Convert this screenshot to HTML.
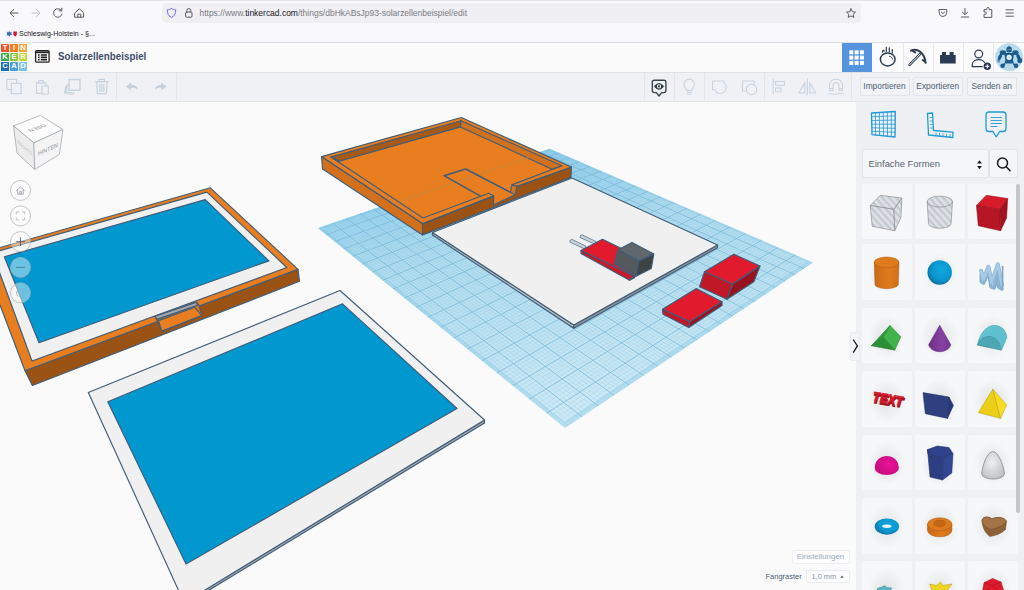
<!DOCTYPE html>
<html lang="de"><head><meta charset="utf-8"><title>Solarzellenbeispiel</title>
<style>
*{box-sizing:border-box;margin:0;padding:0}
html,body{width:1024px;height:590px;overflow:hidden;background:#f9f9fb;font-family:"Liberation Sans",sans-serif}
body{position:relative}
.abs{position:absolute}
svg{position:absolute;overflow:visible}
#chrome{position:absolute;left:0;top:0;width:1024px;height:42px;background:#f9f9fb}
#chrome .topline{position:absolute;left:0;top:0;width:1024px;height:1px;background:#e4e4ea}
#urlbar{position:absolute;left:162px;top:3px;width:699px;height:20px;border-radius:4px;background:#f0f0f4}
#url{position:absolute;left:199.5px;top:8.4px;font-size:8.52px;line-height:10px;color:#7b7b84;white-space:nowrap;letter-spacing:-0.02px}
#url b{font-weight:normal;color:#15141a}
#bm{position:absolute;left:19px;top:28.5px;font-size:7.7px;transform:scaleX(.92);transform-origin:0 0;line-height:10px;color:#15141a;white-space:nowrap}
#hdr{position:absolute;left:0;top:42px;width:1024px;height:31px;background:#fbfbfc;border-top:1px solid #dcdfe4;border-bottom:1px solid #dde1e8}
#title{position:absolute;left:57.5px;top:50px;font-size:11px;transform:scaleX(.892);transform-origin:0 0;line-height:13px;font-weight:bold;color:#3f5069;white-space:nowrap}
.lg{position:absolute;width:8.2px;height:8.2px;color:#fff;font-size:7.6px;font-weight:bold;line-height:8.6px;border-radius:.6px;text-align:center}
#tb{position:absolute;left:0;top:73px;width:1024px;height:28.5px;background:#f0f1f4;border-bottom:1px solid #e2e5ea}
.vd{position:absolute;top:73px;width:1px;height:28px;background:#e3e6eb}
.hd{position:absolute;top:43px;width:1px;height:29px;background:#e6e9ee}
.btn{position:absolute;top:77px;height:19px;border:1px solid #e1e5eb;border-radius:2px;background:#f1f3f6;color:#4f5e73;font-size:8.4px;line-height:17px;text-align:center;white-space:nowrap}
#vp{position:absolute;left:0;top:101.5px;width:856px;height:488.5px;background:#fafafa}
#panel{position:absolute;left:856px;top:101.5px;width:168px;height:488.5px;background:#eff0f3}
.tile{position:absolute;background:#f6f7f9;border-radius:2px}
#dd{position:absolute;left:862.5px;top:150px;width:125px;height:27px;background:#f5f6f9;border-radius:2px;box-shadow:0 0 2px rgba(120,130,150,.35)}
#dd span{position:absolute;left:6px;top:8px;font-size:9.4px;line-height:12px;color:#5a6472;white-space:nowrap}
#sb{position:absolute;left:990px;top:150px;width:27px;height:27px;background:#f5f6f9;border-radius:2px;box-shadow:0 0 2px rgba(120,130,150,.35)}
#scroll{position:absolute;left:1016.3px;top:184px;width:4.2px;height:329px;background:#c6c6c6;border-radius:2px}
#einst{position:absolute;left:791.5px;top:550px;width:58px;height:13.5px;border:1px solid #eaedf1;border-radius:2px;background:#fdfdfe;color:#a0acba;font-size:7.9px;line-height:12px;text-align:center;white-space:nowrap}
#fang{position:absolute;left:765.5px;top:571.5px;font-size:7.5px;line-height:10px;color:#4d5c72;white-space:nowrap}
#snap{position:absolute;left:805.5px;top:570px;width:44px;height:12.5px;border:1px solid #e9edf2;border-radius:2px;background:#fdfdfe;color:#8a95a3;font-size:7.4px;line-height:11px;white-space:nowrap;padding-left:5px}
#handle{position:absolute;left:849.5px;top:332px;width:10px;height:28.5px;background:#f1f3f6;border:1px solid #e9ecf0;border-radius:1px}
</style></head><body>
<div id="chrome"><div class="topline"></div>
<div id="urlbar"></div>
<div id="url">https://www.<b>tinkercad.com</b>/things/dbHkABsJp93-solarzellenbeispiel/edit</div>
<div id="bm">Schleswig-Holstein - §...</div>
<svg width="1024" height="42" viewBox="0 0 1024 42" style="left:0;top:0">
 <g fill="none" stroke="#5b5b66" stroke-width="1" stroke-linecap="round" stroke-linejoin="round">
  <path d="M18 13H10.3M13.8 9.3L10 13l3.8 3.7"/>
  <path d="M32 13h7.7M36.200 9.3L40 13l-3.800 3.7" stroke="#c0c0c8"/>
  <path d="M61.400 10.500A4.300 4.300 0 1 0 62 14.200M61.800 8.200v2.600h-2.600"/>
  <path d="M75 12.800L79.300 8.800l4.300 4v4.400h-8.600zM77.800 17.200v-3h3v3"/>
  <path d="M171.500 8.600c1.500 1 3 1.200 4.200 1.200 0 4-1.200 6.400-4.200 7.600-3-1.200-4.200-3.600-4.200-7.600 1.200 0 2.700-.2 4.200-1.200z" stroke="#6a6df0"/>
  <rect x="185.600" y="12" width="6.400" height="5.200" rx="1"/><path d="M186.900 12v-1.500a1.900 1.900 0 0 1 3.800 0V12"/>
  <path d="M851 8.800l1.400 2.900 3.100.4-2.300 2.200.6 3.100-2.800-1.500-2.800 1.500.6-3.100-2.300-2.200 3.100-.4z"/>
  <path d="M939.300 9.500h7.400v3.200a3.700 3.700 0 0 1-7.400 0zM941.300 12l1.700 1.600 1.700-1.600"/>
  <path d="M965 8.500v6M962.500 12.200l2.500 2.500 2.500-2.500M961.300 17h7.400"/>
  <path d="M984 17v-2.600h1.200a1.200 1.200 0 0 0 0-2.400H984V9.600h2.800V8.700a1.200 1.200 0 0 1 2.400 0v.9h2.600V17z"/>
  <path d="M1006 9.800h7.400M1006 13h7.400M1006 16.200h7.400"/>
 </g>
 <g>
  <path d="M6.500 31.500l1.700 1 1-1.800.9 1.900 1.800-.8-.8 1.800 1.400 1.300-2 .2-1 1.700-1.200-1.500-2 .3 1-1.700z" fill="#3c6db0"/>
  <path d="M13.300 31.600h3.600v2.200c0 1.600-1 2.400-1.800 2.800-.8-.4-1.800-1.200-1.800-2.800z" fill="#d8163c"/>
 </g>
</svg>
</div>

<div id="hdr"></div>
<div class="lg" style="left:1px;top:44.2px;background:#f0512b">T</div><div class="lg" style="left:10px;top:44.2px;background:#f47b20">I</div><div class="lg" style="left:19px;top:44.2px;background:#f9a13a">N</div>
<div class="lg" style="left:1px;top:53.2px;background:#3aae49">K</div><div class="lg" style="left:10px;top:53.2px;background:#8cc63f">E</div><div class="lg" style="left:19px;top:53.2px;background:#c8d42e">R</div>
<div class="lg" style="left:1px;top:62.4px;background:#1c6fb7">C</div><div class="lg" style="left:10px;top:62.4px;background:#4a9fd8">A</div><div class="lg" style="left:19px;top:62.4px;background:#7cc4e8">D</div>
<div id="title">Solarzellenbeispiel</div>
<div class="abs" style="left:841.7px;top:43px;width:30px;height:29px;background:#5694de"></div>
<div class="hd" style="left:902.5px"></div><div class="hd" style="left:932.5px"></div><div class="hd" style="left:963px"></div><div class="hd" style="left:993.3px"></div>
<svg width="1024" height="31" viewBox="0 42 1024 31" style="left:0;top:42px">
 <g fill="none" stroke="#222" stroke-width="1.300"><rect x="35.600" y="50.600" width="13.500" height="11.500" rx="1.200"/><path d="M35.600 52.300h13.500" stroke-width="1.800"/></g>
 <g stroke="#222" stroke-width="1.300"><path d="M38 55h1.600M40.800 55h6.200M38 57.400h1.600M40.800 57.400h6.200M38 59.800h1.600M40.800 59.800h6.200" stroke-width="1.600"/></g>
 <g fill="#fff"><rect x="849.300" y="50.300" width="4" height="4"/><rect x="854.600" y="50.300" width="4" height="4"/><rect x="859.900" y="50.300" width="4" height="4"/>
 <rect x="849.300" y="55.600" width="4" height="4"/><rect x="854.600" y="55.600" width="4" height="4"/><rect x="859.900" y="55.600" width="4" height="4"/>
 <rect x="849.300" y="60.900" width="4" height="4"/><rect x="854.600" y="60.900" width="4" height="4"/><rect x="859.900" y="60.900" width="4" height="4"/></g>
 <g fill="none" stroke="#2b3b52" stroke-width="1.500" stroke-linecap="round" stroke-linejoin="round">
  <ellipse cx="887.700" cy="59.400" rx="7.300" ry="6.500"/><path d="M882.800 52.300c-.8-1.800.6-2.800 1.500-1.200M886.300 47.300v4.300M889.300 47.800v4M892.300 49.500v3.500" stroke-width="1.200"/><path d="M889.500 56.300c1.600.2 2.800 1.300 3 2.800" stroke-width="1"/>
  <path d="M909.600 64.900l10.400-10.700" stroke-width="2.600"/><path d="M909.600 64.900l10.400-10.700" stroke="#fff" stroke-width="0.900"/>
  <path d="M911 50.600c6-2.600 13.500 1.500 14.600 12.200M912 50.300l3.300 2.200M925.400 62l-2.600-2" stroke-width="2"/>
  <circle cx="978.700" cy="54" r="3.900" stroke-width="1.200"/><path d="M972.300 66.600v-1.800c0-6.800 12.800-6.800 12.800 0" stroke-width="1.200"/><path d="M972.300 66.600h10" stroke-width="1.200"/>
 </g>
 <path d="M940 55h2v-3h4v3h3.600v-3h4v3h2.100v8.400H940z" fill="#2b3b52"/>
 <circle cx="987.300" cy="66.300" r="4.300" fill="#fdfdfe"/><circle cx="987.300" cy="66.300" r="3.700" fill="#2b3b52"/><path d="M985.300 66.300h4M987.300 64.300v4" stroke="#fff" stroke-width="1"/>
 <circle cx="1009.100" cy="57.200" r="13.900" fill="#b9dcec"/>
 <g fill="#1d5c8e">
  <rect x="1006.400" y="46.800" width="5.400" height="5.800" rx="2"/><path d="M1009.100 45.300l.8 2h-1.600z"/>
  <ellipse cx="1002.900" cy="52.600" rx="3.200" ry="2.400"/><ellipse cx="1015.400" cy="52.600" rx="3.200" ry="2.400"/>
  <path d="M1004.300 53h9.800l-1.300 9.500h-7.200z"/>
  <ellipse cx="1000" cy="57" rx="1.700" ry="3.300" transform="rotate(25 1000 57)"/><ellipse cx="1018.400" cy="57" rx="1.700" ry="3.300" transform="rotate(-25 1018.400 57)"/>
  <ellipse cx="1019.800" cy="60.500" rx="2.400" ry="2.800"/><ellipse cx="998.700" cy="60.800" rx="1.600" ry="2" opacity=".55"/>
  <rect x="1004.800" y="60.800" width="8.800" height="2.600" rx="1"/>
  <ellipse cx="1002.600" cy="65.700" rx="2.300" ry="2.200"/><ellipse cx="1016" cy="65.700" rx="2.300" ry="2.200"/>
  <path d="M1005 62.500l-2.500 2.500h2.800zM1013.400 62.500l2.500 2.500h-2.800z"/>
 </g>
 <circle cx="1009.100" cy="57.300" r="2.600" fill="#eef6fa"/><path d="M1008 57.300h2.200M1009.100 56.200v2.200" stroke="#9cc4dc" stroke-width=".5"/>
 <path d="M1007.600 49.600h1.200M1009.600 49.600h1.200" stroke="#d9b36a" stroke-width=".7"/>
</svg>

<div id="tb"></div>
<div class="vd" style="left:116px"></div><div class="vd" style="left:175.500px"></div>
<div class="vd" style="left:644px"></div><div class="vd" style="left:674px"></div><div class="vd" style="left:704px"></div><div class="vd" style="left:763.500px"></div><div class="vd" style="left:851px"></div>
<div class="btn" style="left:859.500px;width:50px">Importieren</div>
<div class="btn" style="left:913px;width:49.500px">Exportieren</div>
<div class="btn" style="left:967px;width:49.500px">Senden an</div>
<svg width="1024" height="29" viewBox="0 73 1024 29" style="left:0;top:73px">
 <g fill="none" stroke="#c7d3df" stroke-width="1.200" stroke-linejoin="round" stroke-linecap="round">
  <rect x="6.800" y="79.400" width="9.800" height="10.200" rx=".4"/><rect x="11.300" y="83.300" width="9.800" height="10.300" rx=".4" fill="#f0f1f4"/>
  <path d="M36.500 82.500h2M43.500 82.500h2.300v3.500M36.500 82.500v10.800h5"/><rect x="38.800" y="80.600" width="4.600" height="2.800" rx=".8"/><rect x="42" y="86" width="6.300" height="8" rx=".6"/>
  <path d="M66 86l-1.500 7 8.500 1.500M67.500 84.500l-1.500 7.500 8.500 1.200"/><rect x="69" y="79.600" width="11" height="10.600" fill="#f0f1f4" stroke-width="1.500"/>
  <path d="M95.500 81.600h12.800M99.300 81.600v-2.300h5.200v2.300M96.600 81.600l.8 12h9l.8-12M99.900 84v7.500M101.900 84v7.500M103.900 84v7.500"/>
 </g>
 <g fill="#c3d0dd"><path d="M126 86.500l5.200-4v2.500c4 0 6.300 1.800 6.800 5-1.500-1.800-3.600-2.300-6.800-2.300v2.800z"/><path d="M166.500 86.500l-5.200-4v2.500c-4 0-6.300 1.800-6.800 5 1.500-1.800 3.600-2.300 6.800-2.300v2.800z"/></g>
 <g fill="none" stroke="#36434a" stroke-width="1.350" stroke-linejoin="round"><path d="M654.300 80.200h9.600a2 2 0 0 1 2 2v8.400a2 2 0 0 1-2 2h-2.300L659 96l-2.600-3.400h-2.100a2 2 0 0 1-2-2v-8.400a2 2 0 0 1 2-2z"/><path d="M654.400 86.400c2.700-3.700 6.500-3.700 9.200 0-2.700 3.700-6.500 3.700-9.200 0z" fill="#263238" stroke-width="1"/></g>
 <circle cx="659" cy="86.400" r="2.100" fill="#fff"/><circle cx="659" cy="86.400" r="1.100" fill="#263238"/>
 <g fill="none" stroke="#c7d3df" stroke-width="1.100" stroke-linejoin="round" stroke-linecap="round">
  <path d="M686.700 90.500c0-2-2.700-3-2.700-6.200a5.200 5.200 0 0 1 10.400 0c0 3.200-2.700 4.200-2.700 6.200zM687 92.300h4.600M687.600 94h3.400"/>
  <path d="M712.500 81h11.500v2.500c3.300 1 3.300 9-3.500 10-3.500.4-5-1.800-5.200-3.600h-2.800z"/>
  <path d="M742.500 81h11.500v4M742.500 81v10h3"/><circle cx="751.500" cy="89.500" r="5.200"/>
  <path d="M773.200 79.500v14.500"/><rect x="775.500" y="81.500" width="9" height="3.800"/><rect x="775.500" y="88" width="5.500" height="3.800"/>
  <path d="M807.300 78.500v16.500M804.800 82.500v10.500h-6zM809.800 82.500v10.500h6z"/>
  <path d="M829.500 90.500v-5a6.500 6.500 0 0 1 13 0v5h-3.500v-5a3 3 0 0 0-6 0v5zM829.500 88.500h3.500M839 88.500h3.500"/><path d="M828.500 94c3-1.300 6 1.300 9 0s4.500-.8 6 0" stroke-dasharray="1.200 1.200"/>
 </g>
</svg>

<div id="vp"></div>
<svg width="856" height="488.500" viewBox="0 101.500 856 488.500" style="left:0;top:101.500px;overflow:hidden">
<defs>
 <radialGradient id="bgg" cx="50%" cy="45%" r="75%"><stop offset="0" stop-color="#fcfcfc"/><stop offset="1" stop-color="#f7f7f7"/></radialGradient>
</defs>
<rect x="0" y="101.500" width="856" height="488.500" fill="#fafafa"/>
<polygon points="549.5,148.2 813.0,262.0 565.0,427.5 318.0,227.5" fill="url(#wpg)"/><polygon points="549.5,148.2 813.0,262.0 565.0,427.5 318.0,227.5" fill="#5fb6dc" opacity=".22"/>
<linearGradient id="wpg" gradientUnits="userSpaceOnUse" x1="500" y1="148" x2="560" y2="428"><stop offset="0" stop-color="#84c9ea"/><stop offset=".16" stop-color="#9fd5ed"/><stop offset=".32" stop-color="#b2ddef"/><stop offset="1" stop-color="#cfeaf5"/></linearGradient>
<polygon points="549.6,150.0 806.5,261.5 564.6,421.1 323.5,227.9" fill="url(#wpg)"/>
<path d="M551.4 149.1L319.6 228.8M547.7 148.9L811.2 263.2M553.4 149.9L321.3 230.1M545.8 149.5L809.4 264.4M555.3 150.8L322.9 231.5M544.0 150.1L807.6 265.6M557.3 151.6L324.6 232.8M542.1 150.8L805.8 266.8M561.2 153.3L327.9 235.6M538.3 152.1L802.2 269.2M563.2 154.2L329.6 236.9M536.4 152.7L800.3 270.5M565.2 155.0L331.4 238.3M534.6 153.4L798.5 271.7M567.2 155.9L333.1 239.7M532.6 154.0L796.6 273.0M571.3 157.6L336.6 242.5M528.8 155.3L792.8 275.5M573.3 158.5L338.3 244.0M526.9 156.0L790.9 276.7M575.4 159.4L340.1 245.4M525.0 156.7L789.0 278.0M577.4 160.3L341.9 246.8M523.0 157.3L787.1 279.3M581.6 162.1L345.5 249.8M519.1 158.7L783.2 281.9M583.7 163.0L347.3 251.2M517.1 159.3L781.3 283.2M585.8 163.9L349.1 252.7M515.1 160.0L779.3 284.5M587.9 164.8L351.0 254.2M513.2 160.7L777.3 285.8M592.2 166.7L354.7 257.3M509.2 162.1L773.3 288.5M594.4 167.6L356.6 258.8M507.2 162.7L771.3 289.8M596.6 168.6L358.5 260.3M505.1 163.4L769.3 291.2M598.8 169.5L360.5 261.9M503.1 164.1L767.2 292.5M603.2 171.4L364.3 265.0M499.0 165.5L763.1 295.3M605.4 172.4L366.3 266.6M497.0 166.2L761.0 296.7M607.6 173.4L368.3 268.2M494.9 166.9L758.9 298.1M609.9 174.3L370.3 269.8M492.8 167.7L756.8 299.5M614.4 176.3L374.3 273.1M488.6 169.1L752.6 302.3M616.7 177.3L376.4 274.8M486.5 169.8L750.4 303.7M619.1 178.3L378.4 276.4M484.4 170.5L748.3 305.2M621.4 179.3L380.5 278.1M482.3 171.3L746.1 306.6M626.1 181.3L384.7 281.5M478.0 172.7L741.7 309.6M628.4 182.3L386.8 283.2M475.9 173.4L739.5 311.0M630.8 183.3L388.9 284.9M473.7 174.2L737.3 312.5M633.2 184.4L391.1 286.7M471.6 174.9L735.1 314.0M638.0 186.5L395.5 290.2M467.2 176.4L730.5 317.0M640.5 187.5L397.7 292.0M465.0 177.2L728.3 318.5M642.9 188.6L399.9 293.8M462.8 177.9L726.0 320.1M645.4 189.6L402.1 295.6M460.6 178.7L723.7 321.6M650.4 191.8L406.7 299.3M456.1 180.2L719.0 324.7M652.9 192.9L409.0 301.2M453.9 181.0L716.6 326.3M655.4 194.0L411.3 303.0M451.6 181.8L714.3 327.9M658.0 195.1L413.6 304.9M449.3 182.5L711.9 329.5M663.1 197.3L418.3 308.8M444.8 184.1L707.0 332.7M665.7 198.4L420.7 310.7M442.5 184.9L704.6 334.3M668.3 199.5L423.2 312.6M440.2 185.7L702.1 336.0M670.9 200.7L425.6 314.6M437.8 186.5L699.7 337.6M676.2 203.0L430.5 318.6M433.2 188.1L694.7 341.0M678.9 204.1L433.0 320.6M430.8 188.9L692.2 342.6M681.6 205.3L435.5 322.7M428.4 189.7L689.6 344.3M684.3 206.5L438.1 324.7M426.1 190.5L687.1 346.0M689.8 208.8L443.2 328.9M421.3 192.1L681.9 349.5M692.6 210.0L445.8 331.0M418.9 193.0L679.3 351.2M695.3 211.2L448.5 333.1M416.4 193.8L676.7 353.0M698.2 212.4L451.1 335.3M414.0 194.6L674.0 354.7M703.8 214.9L456.5 339.6M409.1 196.3L668.7 358.3M706.7 216.1L459.2 341.8M406.6 197.2L666.0 360.1M709.6 217.3L462.0 344.1M404.2 198.0L663.3 361.9M712.4 218.6L464.7 346.3M401.7 198.9L660.6 363.7M718.3 221.1L470.3 350.9M396.7 200.6L655.0 367.4M721.3 222.4L473.2 353.2M394.1 201.4L652.2 369.3M724.2 223.7L476.1 355.5M391.6 202.3L649.4 371.2M727.2 225.0L479.0 357.8M389.0 203.2L646.6 373.1M733.3 227.6L484.9 362.6M383.9 204.9L640.8 376.9M736.3 228.9L487.8 365.0M381.3 205.8L638.0 378.8M739.4 230.2L490.8 367.5M378.7 206.7L635.0 380.8M742.5 231.6L493.9 369.9M376.1 207.6L632.1 382.7M748.8 234.3L500.0 374.9M370.8 209.4L626.1 386.7M752.0 235.6L503.2 377.4M368.2 210.3L623.1 388.7M755.1 237.0L506.3 380.0M365.5 211.2L620.1 390.7M758.4 238.4L509.5 382.6M362.8 212.2L617.1 392.8M764.8 241.2L516.0 387.8M357.4 214.0L610.9 396.9M768.1 242.6L519.3 390.5M354.7 214.9L607.8 398.9M771.4 244.1L522.6 393.1M351.9 215.9L604.6 401.0M774.8 245.5L525.9 395.9M349.2 216.8L601.5 403.2M781.5 248.4L532.7 401.3M343.6 218.7L595.1 407.4M784.9 249.9L536.1 404.1M340.9 219.7L591.8 409.6M788.3 251.3L539.6 407.0M338.1 220.6L588.6 411.8M791.8 252.8L543.1 409.8M335.2 221.6L585.3 414.0M798.7 255.8L550.3 415.6M329.5 223.5L578.6 418.4M802.3 257.4L553.9 418.5M326.7 224.5L575.3 420.7M805.8 258.9L557.6 421.5M323.8 225.5L571.9 422.9M809.4 260.4L561.3 424.5M320.9 226.5L568.4 425.2" stroke="#8fc9e4" stroke-width="0.5" fill="none" opacity="0.55"/>
<path d="M559.2 152.4L326.3 234.2M540.2 151.4L804.0 268.0M569.2 156.8L334.8 241.1M530.7 154.7L794.7 274.2M579.5 161.2L343.7 248.3M521.1 158.0L785.2 280.6M590.1 165.8L352.9 255.7M511.2 161.4L775.3 287.1M601.0 170.5L362.4 263.4M501.1 164.8L765.2 293.9M612.2 175.3L372.3 271.5M490.7 168.4L754.7 300.9M623.7 180.3L382.6 279.8M480.2 172.0L743.9 308.1M635.6 185.4L393.3 288.4M469.4 175.7L732.8 315.5M647.9 190.7L404.4 297.5M458.3 179.5L721.3 323.2M660.5 196.2L416.0 306.8M447.1 183.3L709.5 331.1M673.6 201.8L428.0 316.6M435.5 187.3L697.2 339.3M687.1 207.6L440.6 326.8M423.7 191.3L684.5 347.7M701.0 213.6L453.8 337.4M411.6 195.5L671.4 356.5M715.4 219.9L467.5 348.6M399.2 199.7L657.8 365.6M730.2 226.3L481.9 360.2M386.5 204.1L643.7 375.0M745.6 232.9L497.0 372.4M373.4 208.5L629.1 384.7M761.6 239.8L512.7 385.2M360.1 213.1L614.0 394.8M778.1 246.9L529.3 398.6M346.4 217.8L598.3 405.3M795.2 254.3L546.7 412.7M332.4 222.6L582.0 416.2" stroke="#78b9d8" stroke-width="0.8" fill="none"/>

<g stroke="#3f5d79" stroke-width="1.150" stroke-linejoin="round">
<!-- white plate on workplane -->
<polygon points="432.500,232 573.800,324.500 573.800,327.700 432.500,234.600" fill="#b9bcc0"/>
<polygon points="573.800,324.500 717.500,244.500 717.500,247.300 573.800,327.700" fill="#8e9297"/>
<polygon points="432.500,232 572,177.500 717.500,244.500 573.800,324.500" fill="#f0f0f0"/>
<!-- pins -->
<g stroke="#5a7791" stroke-width="0.800">
<polygon points="570.300,239.500 571.800,238.800 586,245.800 584.500,248.500 569.800,241.600" fill="#c9d0d6"/>
<polygon points="580.500,235 582,234.300 596,241 594.500,243.500 580,237" fill="#c9d0d6"/>
</g>
<!-- red pcb -->
<polygon points="581,250 602.500,238.800 650,262 633.300,275.200" fill="#e11b2d"/>
<polygon points="581,250 633.300,275.200 629.500,279.800 581,253" fill="#c91829"/>
<polygon points="633.300,275.200 637,273 634,277.600 629.500,279.800" fill="#a01220"/>
<!-- grey block -->
<polygon points="618,249.200 632,242 653.800,253.400 638.800,260.600" fill="#61686d"/>
<polygon points="618,249.200 638.800,260.600 636,275.800 614.300,263.300" fill="#53595d"/>
<polygon points="638.800,260.600 653.800,253.400 651.300,268 636,275.800" fill="#3e4346"/>
<!-- red blocks -->
<polygon points="704.500,271.300 733.800,253.800 760,265.500 732.500,283.800" fill="#e11b2d"/>
<polygon points="704.500,271.300 732.500,283.800 727,298.800 699.500,286.300" fill="#c11828"/>
<polygon points="732.500,283.800 760,265.500 753.800,281.300 727,298.800" fill="#98121f"/>
<polygon points="662.500,308.800 696.300,288 722,301.300 690,321.300" fill="#e11b2d"/>
<polygon points="662.500,308.800 690,321.300 688.800,327 663,313.800" fill="#c11828"/>
<polygon points="690,321.300 722,301.300 722,305 688.800,327" fill="#98121f"/>
<!-- orange tray -->
<polygon points="321.500,156.100 422.600,223.100 422.600,234.400 322.600,168.600" fill="#d2701c"/>
<polygon points="488.800,192.800 493.700,195.400 493.500,204.600 515.300,194.200 516.800,185.900 511.900,184.400" fill="#e87e1f" stroke="none"/>
<polygon points="422.600,223.100 493.700,195.400 493.500,204.600 515.300,194.200 516.800,185.900 571.400,166.500 571,176.900 422.600,234.400" fill="#9a5315"/>
<polygon points="461.300,117 321.500,156.100 422.600,223.100 493.700,195.400 488.800,192.800 511.900,184.400 516.800,185.900 571.400,166.500" fill="#e87e1f" stroke="none"/>
<polyline points="516.800,185.900 571.400,166.500 461.300,117 321.500,156.100 422.600,223.100 493.700,195.400" fill="none"/>
<polygon points="330.800,156.600 461,120.200 460.500,126.400 339.400,160.800" fill="#a55a17"/>
<polygon points="461,120.200 562,165.200 552.200,168.700 460.500,126.400" fill="#d2711d"/>
<polyline points="339.400,160.800 330.800,156.600 423,217.500 488.800,192.800 493.700,195.400" fill="none"/>
<polyline points="516.800,185.900 511.900,184.400 562,165.200" fill="none"/>
<polygon points="511.900,184.400 516.800,185.900 515.300,194.200 510.400,191.800" fill="#d6741d"/>
<path d="M400 200.600L528.500 157" stroke="#c48840" stroke-width="1" fill="none"/>
<polyline points="480.900,195.800 444.100,175.200 465.800,168.500 510.400,191.800" fill="none" stroke-width="1.500"/>
<!-- left orange frame -->
<polygon points="25,370.300 298,268.800 299.500,280.800 32.400,385" fill="#9a5315"/>
<polygon points="210.300,187.300 298,268.800 25,370.300 -19.800,252.600" fill="#e87e1f"/>
<polygon points="206.900,191.600 286.800,267 32,360.500 -8.400,250.300 -8.400,252.500" fill="#f0f0f0"/>
<polygon points="205.300,199.100 268.900,260.400 39,342.200 4.300,256.300" fill="#0098cf"/>
<!-- notch -->
<polygon points="155.200,315.800 196.600,301.700 199.400,305.600 201.700,315 161.900,330.600" fill="#d2701c"/>
<polygon points="155.200,315.800 196.600,301.700 197.400,304.800 156.800,318.900" fill="#a3a6aa"/>
<polygon points="158.400,320.100 194.700,306.800 201.700,315 161.900,330.600" fill="#e87e1f"/>
<!-- lower panel -->
<polygon points="484.500,419.500 484.500,422.500 205.200,592 199.700,592" fill="#a3a6aa"/>
<polygon points="340,290 484.500,419.500 201,592 179.500,592 88.300,392" fill="#f0f0f0"/>
<polygon points="342.500,303.300 457,408 186,563.500 107.800,401.300" fill="#0098cf"/>
</g>
<g stroke="#9aa0a6" stroke-width="0.700" stroke-linejoin="round">
<polygon points="40.300,114.900 63,129 33.900,142.400 13.500,125.400" fill="#fdfdfd"/>
<polygon points="13.500,125.400 33.900,142.400 34.700,169 17,152.500" fill="#ececec"/>
<polygon points="33.900,142.400 63,129 59.300,154 34.700,169" fill="#f4f4f4"/>
</g>
<g font-family="'Liberation Sans',sans-serif" font-size="6.400" fill="#8d939c" text-anchor="middle">
<text transform="matrix(-0.93,0.33,-0.72,-0.45,37.300,127.600)" x="0" y="2.300">OBEN</text>
<text transform="matrix(0.9,-0.41,0.04,1,47.800,148.600)" x="0" y="2.200" font-size="5.900">HINTEN</text>
<text transform="matrix(0.7,0.62,0.03,1,24.500,147)" x="0" y="2" font-size="5" fill="#b4b9bf">RECHTS</text>
</g>
<g fill="#fff" fill-opacity="0.420" stroke="#a9adb3" stroke-width="0.700">
<circle cx="20.500" cy="189.900" r="10"/><circle cx="20.500" cy="215.400" r="10"/><circle cx="20.500" cy="241.100" r="10"/><circle cx="20.500" cy="266.900" r="10"/><circle cx="20.500" cy="292.300" r="10"/>
</g>
<g fill="none" stroke="#8d939a" stroke-width="0.900" stroke-linecap="round" stroke-linejoin="round">
<path d="M16.500 190.200l4-3.800 4 3.800M17.700 189.400v4.300h5.600v-4.300M19.600 193.700v-2.600h1.800v2.600" stroke="#a0a5ab"/>
<path d="M16.300 213.400v-2h2.200M22.500 211.400h2.200v2M24.700 217.400v2h-2.200M18.500 219.400h-2.200v-2" stroke="#b3b7bc"/>
<path d="M16.500 241.200h8M20.500 237.200v8" stroke="#555b63"/>
<path d="M16.500 266.900h8" stroke="#4d7f99"/>
<path d="M17 291l3.500-2 3.500 2v3.500l-3.500 2-3.500-2zM17 291l3.500 2 3.500-2M20.500 293v3.500" stroke="#7fb3cc" stroke-width="0.700"/>
</g>

</svg>

<div id="panel"></div>
<div class="tile" style="left:862px;top:183.9px;width:49.8px;height:55.5px"></div>
<div class="tile" style="left:915px;top:183.9px;width:49.5px;height:55.5px"></div>
<div class="tile" style="left:968px;top:183.9px;width:47.6px;height:55.5px"></div>
<div class="tile" style="left:862px;top:244.4px;width:49.8px;height:55.2px"></div>
<div class="tile" style="left:915px;top:244.4px;width:49.5px;height:55.2px"></div>
<div class="tile" style="left:968px;top:244.4px;width:47.6px;height:55.2px"></div>
<div class="tile" style="left:862px;top:307.8px;width:49.8px;height:55.5px"></div>
<div class="tile" style="left:915px;top:307.8px;width:49.5px;height:55.5px"></div>
<div class="tile" style="left:968px;top:307.8px;width:47.6px;height:55.5px"></div>
<div class="tile" style="left:862px;top:371px;width:49.8px;height:56.0px"></div>
<div class="tile" style="left:915px;top:371px;width:49.5px;height:56.0px"></div>
<div class="tile" style="left:968px;top:371px;width:47.6px;height:56.0px"></div>
<div class="tile" style="left:862px;top:434.6px;width:49.8px;height:55.9px"></div>
<div class="tile" style="left:915px;top:434.6px;width:49.5px;height:55.9px"></div>
<div class="tile" style="left:968px;top:434.6px;width:47.6px;height:55.9px"></div>
<div class="tile" style="left:862px;top:498px;width:49.8px;height:55.5px"></div>
<div class="tile" style="left:915px;top:498px;width:49.5px;height:55.5px"></div>
<div class="tile" style="left:968px;top:498px;width:49.5px;height:55.5px"></div>
<div class="tile" style="left:862px;top:561.4px;width:49.8px;height:55.6px"></div>
<div class="tile" style="left:915px;top:561.4px;width:49.5px;height:55.6px"></div>
<div class="tile" style="left:968px;top:561.4px;width:49.5px;height:55.6px"></div>
<div id="dd"><span>Einfache Formen</span></div>
<div id="sb"></div>
<div id="scroll"></div>
<svg width="168" height="488.500" viewBox="856 101.500 168 488.500" style="left:856px;top:101.500px;overflow:hidden">
<defs>
 <radialGradient id="sh"><stop offset="0" stop-color="#000" stop-opacity=".085"/><stop offset="1" stop-color="#000" stop-opacity="0"/></radialGradient>
 <pattern id="stripe" width="5" height="5" patternUnits="userSpaceOnUse" patternTransform="rotate(48)"><rect width="5" height="5" fill="#dfe2e7"/><rect width="5" height="2.400" fill="#c4c9d0"/></pattern>
 <radialGradient id="sph" cx="58%" cy="40%" r="65%"><stop offset="0" stop-color="#12a8e0"/><stop offset=".6" stop-color="#0b97d0"/><stop offset="1" stop-color="#096f9b"/></radialGradient>
 <linearGradient id="ocyl" x1="0" x2="1"><stop offset="0" stop-color="#c96a18"/><stop offset=".6" stop-color="#e07a1c"/><stop offset="1" stop-color="#d06f1a"/></linearGradient>
 <linearGradient id="cone" x1="0" x2="1"><stop offset="0" stop-color="#6c3186"/><stop offset=".6" stop-color="#8641a3"/><stop offset="1" stop-color="#75368f"/></linearGradient>
 <radialGradient id="mag" cx="60%" cy="45%" r="70%"><stop offset="0" stop-color="#ea1398"/><stop offset="1" stop-color="#c20c7b"/></radialGradient>
 <radialGradient id="para" cx="45%" cy="40%" r="70%"><stop offset="0" stop-color="#eef0f0"/><stop offset="1" stop-color="#b9bdbe"/></radialGradient>
</defs>
<!-- top icons -->
<g fill="none" stroke="#1f9bd7" stroke-width="1.300" stroke-linejoin="round" stroke-linecap="round">
 <path d="M871.500 112.500l23.800-1.500-.3 25.500-23-2.300z"/>
 <path d="M875.400 112.300l.2 22.300M879.300 112l.3 23M883.300 111.800l.2 23.500M887.300 111.500l.2 24M891.300 111.300l.1 24.500M871.500 116.200l23.700-.8M871.500 120l23.700-.4M871.600 123.700l23.600 0M871.700 127.300l23.500.5M871.800 130.800l23.400 1" stroke-width=".8"/>
 <path d="M927.500 113l5-.5 1 17.500 19.500 1.700-.2 5.300-24.300-2.500z"/>
 <path d="M930 117h2M930.200 120.500h2M930.400 124h2M930.600 127.500h2M936 132.500v2M939.500 133v2M943 133.300v2M946.500 133.700v2M950 134v2" stroke-width=".8"/>
 <path d="M989 111.500h14a3 3 0 0 1 3 3v13.500a3 3 0 0 1-3 3h-3.300l-3.500 5.300-3.300-5.300H989a3 3 0 0 1-3-3v-13.500a3 3 0 0 1 3-3z"/>
 <path d="M991 117h10.500M991 120h10.500M991 123h10.500M991 126h6" stroke-width=".9"/>
</g>
<path d="M979.500 159.800l2.400 3.200h-4.800zM979.500 168.800l2.400-3.200h-4.800z" fill="#1a1a1a"/>
<g fill="none" stroke="#1a1a1a" stroke-width="1.500" stroke-linecap="round"><circle cx="1002.500" cy="162.500" r="5"/><path d="M1006.200 166.300l3.800 3.800"/></g>
<!-- shadows -->
<g fill="url(#sh)">
 <ellipse cx="886.500" cy="336" rx="19" ry="22"/><ellipse cx="939.700" cy="336" rx="19" ry="22"/><ellipse cx="992.500" cy="336" rx="19" ry="22"/>
 <ellipse cx="886.500" cy="400" rx="19" ry="22"/><ellipse cx="939.700" cy="400" rx="19" ry="22"/><ellipse cx="992.500" cy="400" rx="19" ry="22"/>
 <ellipse cx="886.500" cy="463" rx="19" ry="22"/><ellipse cx="939.700" cy="463" rx="19" ry="22"/><ellipse cx="992.500" cy="463" rx="19" ry="22"/>
 <ellipse cx="886.500" cy="526" rx="19" ry="22"/><ellipse cx="939.700" cy="526" rx="19" ry="22"/><ellipse cx="992.500" cy="526" rx="19" ry="22"/>
 <ellipse cx="886.500" cy="590" rx="19" ry="22"/><ellipse cx="939.700" cy="590" rx="19" ry="22"/><ellipse cx="992.500" cy="590" rx="19" ry="22"/>
 <ellipse cx="939.700" cy="272" rx="17" ry="19"/><ellipse cx="886.500" cy="274" rx="17" ry="19"/>
</g>
<!-- row1 -->
<g stroke="#7d838b" stroke-width=".6" stroke-linejoin="round">
 <polygon points="870.200,205 880.300,194.800 901.900,197.500 894,208.900" fill="url(#stripe)"/>
 <polygon points="870.200,205 894,208.900 894.700,230.300 872.200,225.800" fill="url(#stripe)"/>
 <polygon points="894,208.900 901.900,197.500 900.900,217.200 894.700,230.300" fill="url(#stripe)"/>
 <path d="M927.200 201.100L928.500 223a11.300 4.800 0 0 0 22.600 0L952.500 201.100z" fill="url(#stripe)"/>
 <ellipse cx="939.800" cy="201.100" rx="12.600" ry="5.500" fill="url(#stripe)"/>
</g>
<g stroke="#8a0f1a" stroke-width=".5" stroke-linejoin="round">
 <polygon points="976.400,205 986.300,194.800 1007.700,198 999.800,208.900" fill="#d81b2b"/>
 <polygon points="976.400,205 999.800,208.900 1000.600,230.300 978.300,225.300" fill="#b61523"/>
 <polygon points="999.800,208.900 1007.700,198 1006.600,217.500 1000.600,230.300" fill="#a5121f"/>
</g>
<!-- row2 -->
<g stroke="#a85712" stroke-width=".5">
 <path d="M874.200 261.900l.8 22.500a11.800 4.600 0 0 0 23.200 0l.8-22.500z" fill="url(#ocyl)"/>
 <ellipse cx="886.600" cy="261.900" rx="12.400" ry="5.400" fill="#de7b1d"/>
</g>
<circle cx="939.700" cy="272" r="12.200" fill="url(#sph)"/>
<g fill="none" stroke-linejoin="round" stroke-linecap="round">
 <path d="M981.300 273.500v7.500l2.300 1.500 4.800-11 2.700 15 3 1 4-17.500.2 16 3.600 2.600" stroke="#7fa8c9" stroke-width="3.400"/>
 <path d="M981.300 273.500v7.500l2.300 1.500 4.800-11 2.700 15 3 1 4-17.500.2 16 3.600 2.600" stroke="#8db5d6" stroke-width="2.200"/>
 <path d="M981.200 270.500l2.200 8.500 5-12.700 3.300 15.700 6.100-18.200 4.100 21.200" stroke="#86afcf" stroke-width="4"/>
 <path d="M981.200 270.500l2.200 8.500 5-12.700 3.300 15.700 6.100-18.200 4.100 21.200" stroke="#a6cae6" stroke-width="3"/>
 <path d="M1002.600 266v21.500" stroke="#7da5c6" stroke-width="1.600"/>
</g>
<!-- row3 -->
<g stroke="#1f7a2b" stroke-width=".5" stroke-linejoin="round">
 <polygon points="890,325 900.900,336.300 894.700,349.700 883.100,336.700" fill="#42b24c"/>
 <polygon points="890,325 883.100,336.700 871.300,345.300" fill="#2f9a3a"/>
 <polygon points="883.100,336.700 894.700,349.700 871.300,345.300" fill="#2a8f35"/>
</g>
<path d="M939.700 324.700L928.600 344.300a11.200 8 0 0 0 22.200 0z" fill="url(#cone)" stroke="#5b2873" stroke-width=".5"/>
<g stroke="#3b8c9a" stroke-width=".5" stroke-linejoin="round">
 <path d="M977.500 344.500c1-8 7-18 15-19.500 7-1 14 4 14.300 12l-5.300 12.500z" fill="#62c3d2"/>
 <path d="M977.500 344.500c2-6 8-9.500 14-8.500 5 .8 9 4.500 10 13.500z" fill="#4ea6b5"/>
 <path d="M992 325c6-1 13 3 14.800 12l-5.300 12.500c-1-9-5-12.700-10-13.500" fill="#5fbfce" stroke="none"/>
</g>
<!-- row4 -->
<g font-family="'Liberation Sans',sans-serif" font-weight="bold" font-style="italic" font-size="13.500">
<text transform="matrix(1,0.17,-0.12,1,872.600,402.200)" fill="#a31220" stroke="#a31220" stroke-width="1.200" textLength="30" lengthAdjust="spacingAndGlyphs">TEXT</text>
<text transform="matrix(1,0.17,-0.12,1,872.300,400.300)" fill="#d51c2c" stroke="#d51c2c" stroke-width=".5" textLength="30" lengthAdjust="spacingAndGlyphs">TEXT</text>
</g>
<g stroke="#1c2a5e" stroke-width=".5" stroke-linejoin="round">
 <polygon points="923,392.100 949,396.500 947.500,417.900 925.300,413.200" fill="#2e4080"/>
 <polygon points="949,396.500 953.400,404.900 947.500,417.900" fill="#27387a"/>
</g>
<g stroke="#b59a10" stroke-width=".5" stroke-linejoin="round">
 <polygon points="992.800,388.700 978.300,412.100 1000.600,417.900" fill="#eccf18"/>
 <polygon points="992.800,388.700 1000.600,417.900 1006.600,404.300" fill="#f8de22"/>
</g>
<!-- row5 -->
<path d="M874.800 467.500c0-16 24-16 24 0a12 7 0 0 1-24 0z" fill="url(#mag)"/>
<g stroke="#1c2a5e" stroke-width=".5" stroke-linejoin="round">
 <polygon points="927.500,449.100 937.300,445.500 949,447 953,453 942.800,457.300 928.500,455" fill="#30438a"/>
 <polygon points="927.500,449.100 928.500,455 942.800,457.300 942.500,479.600 930,476.500" fill="#2d3f82"/>
 <polygon points="942.800,457.300 953,453 951.800,472.500 942.500,479.600" fill="#324792"/>
</g>
<path d="M981.600 473C983 463 987.500 451.100 992.800 451.100C998.100 451.100 1003 463 1004.500 473A11.450 5.600 0 0 1 981.600 473z" fill="url(#para)" stroke="#6a6e70" stroke-width=".6"/>
<!-- row6 -->
<ellipse cx="886.900" cy="526.100" rx="12.200" ry="8.100" fill="url(#sph)"/><ellipse cx="886.800" cy="525.700" rx="4.600" ry="1.700" fill="#e9f3f8"/>
<g stroke="#a85712" stroke-width=".5">
 <path d="M927.500 523.800v6a12.200 6.500 0 0 0 24.400 0v-6z" fill="url(#ocyl)"/>
 <ellipse cx="939.700" cy="523.800" rx="12.200" ry="6.500" fill="#df7b1d"/>
 <ellipse cx="939.700" cy="522.900" rx="5.800" ry="3.300" fill="#c46617"/>
</g>
<g stroke="#6b4726" stroke-width=".5" stroke-linejoin="round">
 <path d="M982 521c-.5-4 5-6.500 10-2.500 4-2.500 13-2 14.500 2.500l-1 8c-4 4-10 6-15.500 7-4-3-7-7-8-15z" fill="#8d6038"/>
 <path d="M982 521c-.5-4 5-6.500 10-2.500 4-2.500 13-2 14.500 2.500-2 4-9 6.500-16 8-4-2-7.500-4-8.500-8z" fill="#a47446"/>
</g>
<!-- row7 -->
<g stroke-width=".5" stroke-linejoin="round">
 <path d="M876.900 588l5-1.500 3-1.500 2 2 5 .5-2 3h-12z" fill="#5bb6c4" stroke="#3b8c9a"/>
 <path d="M929.500 583.500l7 1.500 4-3.500 2.500 3.500 9-1.500-5 6.500h-15z" fill="#f0d51c" stroke="#b59a10"/>
 <path d="M982.600 590l1.500-8 8.500-4 8.500 3.500 2.600 8.500z" fill="#de1b2c" stroke="#9c121e"/><path d="M984.100 582l8 3 9-3.500M992.100 585l-5 5M992.100 585l6 5" fill="none" stroke="#9c121e"/>
</g>
</svg>

<div id="einst">Einstellungen</div>
<div id="fang">Fangraster</div>
<div id="snap">1,0 mm</div>
<div id="handle"></div>
<svg width="1024" height="590" viewBox="0 0 1024 590" style="left:0;top:0;pointer-events:none">
<path d="M853.200 339.500l4.200 6.400-4.200 6.700" fill="none" stroke="#1a1a1a" stroke-width="1.300"/>
<path d="M840.300 577.800l1.700-2.300 1.700 2.300z" fill="#555"/>
</svg>

</body></html>
